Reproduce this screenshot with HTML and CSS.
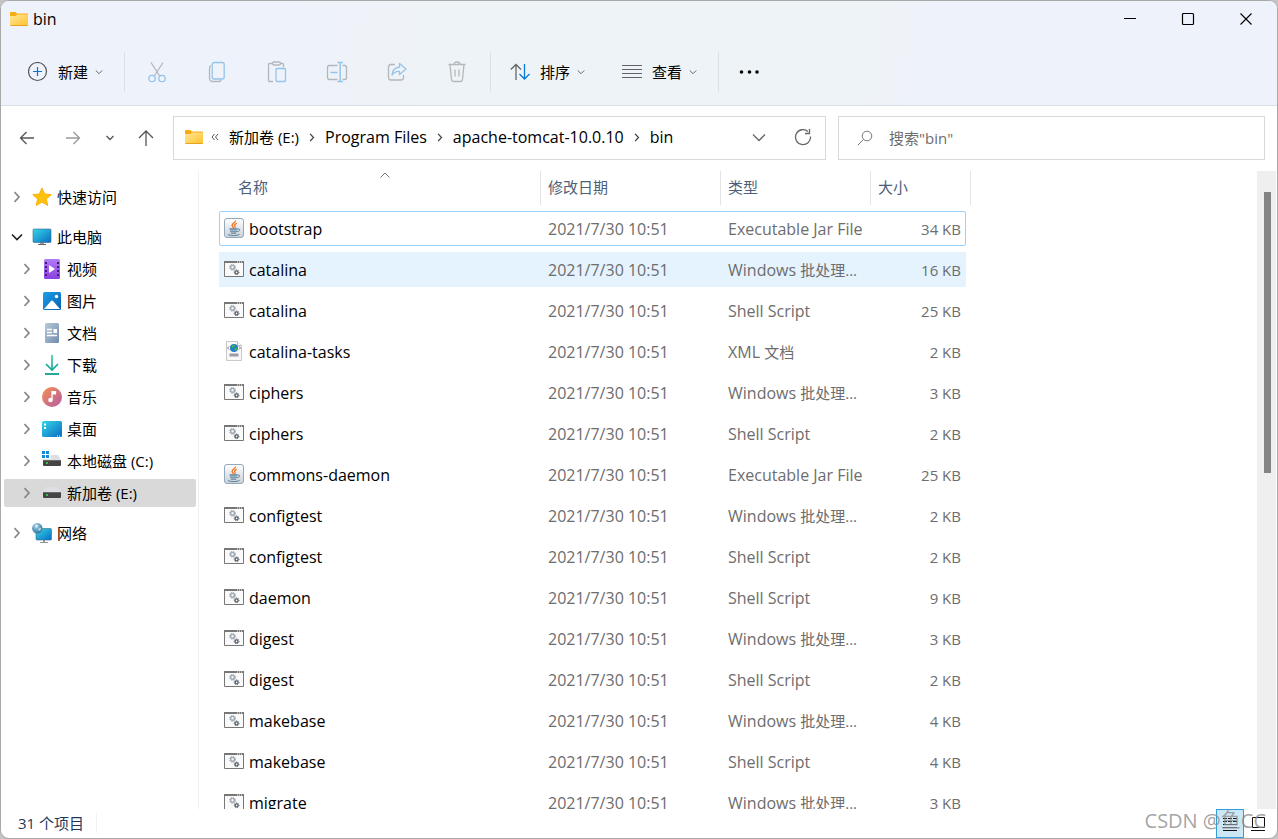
FILE: index.html
```html
<!DOCTYPE html>
<html lang="zh-CN">
<head>
<meta charset="utf-8">
<title>bin</title>
<link rel="stylesheet" href="styles.css">
</head>
<body>
<svg class="sprite" aria-hidden="true">
  <defs>
    <linearGradient id="g-folder" x1="0" y1="0" x2="1" y2="1"><stop offset="0" stop-color="#ffe69b"/><stop offset="1" stop-color="#ffc32b"/></linearGradient>
    <linearGradient id="g-screen" x1="0" y1="0" x2="1" y2="1"><stop offset="0" stop-color="#35d6e6"/><stop offset="1" stop-color="#0a6cc4"/></linearGradient>
    <linearGradient id="g-video" x1="0" y1="0" x2="0" y2="1"><stop offset="0" stop-color="#b27bf5"/><stop offset="1" stop-color="#8a3fe0"/></linearGradient>
    <linearGradient id="g-pic" x1="0" y1="0" x2="1" y2="1"><stop offset="0" stop-color="#1fa0e8"/><stop offset="1" stop-color="#0560b5"/></linearGradient>
    <linearGradient id="g-doc" x1="0" y1="0" x2="1" y2="1"><stop offset="0" stop-color="#b9cadb"/><stop offset="1" stop-color="#6f8cab"/></linearGradient>
    <linearGradient id="g-music" x1="0" y1="0" x2="1" y2="1"><stop offset="0" stop-color="#f59250"/><stop offset="1" stop-color="#b45aa6"/></linearGradient>
    <linearGradient id="g-down" x1="0" y1="0" x2="0" y2="1"><stop offset="0" stop-color="#35c98e"/><stop offset="1" stop-color="#0b9f9c"/></linearGradient>
    <linearGradient id="g-java" x1="0" y1="0" x2="0" y2="1"><stop offset="0" stop-color="#ffffff"/><stop offset="1" stop-color="#c9d0d6"/></linearGradient>
    <radialGradient id="g-globe" cx=".4" cy=".3" r=".8"><stop offset="0" stop-color="#b9dcec"/><stop offset=".5" stop-color="#5b9cbf"/><stop offset="1" stop-color="#2d6c93"/></radialGradient>
  </defs>
  <symbol id="folder" viewBox="0 0 18 14"><path d="M0 1q0-1 1-1h4.500l1.500 1.500h10q1 0 1 1V5H0z" fill="#f8ac12"/><path d="M0 4h5.500l1.500-1.500h10q1 0 1 1V13q0 1-1 1H1q-1 0-1-1z" fill="url(#g-folder)"/><path d="M.5 13.500h17" stroke="#e9a31b"/></symbol>
  <symbol id="down" viewBox="0 0 8 8"><path d="M.8 2.500 4 5.700 7.200 2.500" fill="none" stroke="currentColor"/></symbol>
  <symbol id="right" viewBox="0 0 8 12"><path d="M1.500 1.200 6 6 1.500 10.800" fill="none" stroke="currentColor" stroke-width="1.700"/></symbol>
  <symbol id="cmd" viewBox="0 0 20 16"><path d="M.5.500h19v15H.5z" fill="#fafafa" stroke="#777"/><path d="M0 0h20v2H0z" fill="#777"/><path d="M13 1h1m1 0h1m1 0h1" stroke="#fff"/><circle cx="8.500" cy="6.300" r="1.900" fill="none" stroke="#9ca7b2" stroke-width="1.400"/><circle cx="8.500" cy="6.300" r="3" fill="none" stroke="#9ca7b2" stroke-width="1" stroke-dasharray="1.300 1.056"/><circle cx="12.600" cy="11.300" r="1.500" fill="none" stroke="#56616b" stroke-width="1.300"/><circle cx="12.600" cy="11.300" r="2.400" fill="none" stroke="#56616b" stroke-width="1" stroke-dasharray="1 .885"/></symbol>
  <symbol id="java" viewBox="0 0 20 20"><rect x=".5" y=".5" width="19" height="19" rx="2.500" fill="url(#g-java)" stroke="#93a9bd"/><path d="M11.500 2.500c.6 2-3.700 3-3.400 5 .1 1 1.200 1.600 1.400 2.600M12.800 5.300c-1.800.6-2.900 1.700-1.900 2.900.4.600.3 1.200-.2 1.700" fill="none" stroke="#f0701d" stroke-width="1.300"/><path d="M5.500 11h8M6 13.200h7M6.800 15.200h5.400" stroke="#5d819f" stroke-width="1.300"/><path d="M13.500 11c3-.8 2.800 2.300-.5 2.800M4 16.600c2 1.300 9.500 1.300 11.500-.2" fill="none" stroke="#5d819f"/></symbol>
  <symbol id="xml" viewBox="0 0 20 20"><path d="M2.500.5h11l4 4v15h-15z" fill="#f8f8f8" stroke="#c9c9c9"/><path d="M13.500.5v4h4" fill="#fff" stroke="#bbb"/><circle cx="10" cy="7" r="4" fill="#1d7fc4"/><path d="M8 4.500q2-1.500 3 0l-1.500 2-2 .5zM10 8l3-1.500q.5 2-1.500 3.700z" fill="#42b649"/><path d="M5 5.500 3.500 7 5 8.500m10-3L16.500 7 15 8.500" fill="none" stroke="#777"/><path d="M5.500 12.500h9v3h-9z" fill="#9a9aa8"/></symbol>
  <symbol id="drive" viewBox="0 0 18 11"><path d="M3 0h12l3 5H0z" fill="#dedfe2"/><path d="M0 5h18v5q0 1-1 1H1q-1 0-1-1z" fill="#454545"/><path d="M0 5.500h18" stroke="#6a6a6a"/><path d="M3 8h2" stroke="#36e04c" stroke-width="1.500"/></symbol>
</svg>

<div class="window">
  <header class="top">
    <div class="titlebar">
      <svg class="folder"><use href="#folder"/></svg>
      <h1 class="title">bin</h1>
      <div class="caption">
        <button aria-label="最小化"><svg viewBox="0 0 14 14"><path d="M1 6.500h12" stroke="#000"/></svg></button>
        <button aria-label="最大化"><svg viewBox="0 0 14 14"><rect x="1.500" y="1.500" width="11" height="11" rx="1" fill="none" stroke="#000" stroke-width="1.200"/></svg></button>
        <button aria-label="关闭"><svg viewBox="0 0 14 14"><path d="M1.500 1.500l11 11m0-11-11 11" stroke="#000" stroke-width="1.100"/></svg></button>
      </div>
    </div>
    <div class="toolbar">
      <button class="cmd"><svg class="i20" viewBox="0 0 20 20" fill="none"><circle cx="9.500" cy="9.500" r="9" stroke="#555" stroke-width="1.200"/><path d="M9.500 5v9M5 9.500h9" stroke="#0a74cc" stroke-width="1.200"/></svg><span>新建</span><svg class="caret"><use href="#down"/></svg></button>
      <i class="sep sep-a"></i>
      <div class="tools">
        <button aria-label="剪切"><svg viewBox="0 0 20 22" fill="none" stroke-width="1.300"><path d="M4 1.500 13 15.500M16 1.500 7 15.500" stroke="#b4b7ba"/><g stroke="#94c4ea"><circle cx="5" cy="17.500" r="3.200" fill="#eff3fa"/><circle cx="15" cy="17.500" r="3.200" fill="#eff3fa"/></g></svg></button>
        <button aria-label="复制"><svg viewBox="0 0 20 22" fill="none" stroke-width="1.300"><path d="M4 4.500Q2.500 5 2.500 7v10q0 3.500 3.500 3.500h6q1.500 0 2.300-1.300" stroke="#b4b7ba"/><rect x="5.200" y="1.500" width="12" height="16.500" rx="2" stroke="#94c4ea"/></svg></button>
        <button aria-label="粘贴"><svg viewBox="0 0 20 22" fill="none" stroke-width="1.300"><path d="M6 20.500H2.500q-1 0-1-1v-16q0-1 1-1H6m7 0h2.500q1 0 1 1v2.700" stroke="#b4b7ba"/><rect x="5.500" y="1" width="8" height="3" rx="1.500" stroke="#b4b7ba"/><rect x="9" y="7.500" width="9.500" height="13" rx="1" stroke="#94c4ea"/></svg></button>
        <button aria-label="重命名"><svg class="wide" viewBox="0 0 22 22" fill="none" stroke-width="1.300"><path d="M11.500 18.500H3.500q-2 0-2-2v-10q0-2 2-2h8m5 0h2q2 0 2 2v10q0 2-2 2h-2" stroke="#b4b7ba"/><path d="M11.500 1.500h5.500m-5.500 19H17M14.200 1.500v19M4.500 11.500h7" stroke="#94c4ea" stroke-width="1.500"/></svg></button>
        <button aria-label="共享"><svg viewBox="0 0 20 22" fill="none" stroke-width="1.300"><path d="M8 3.500H4q-2.500 0-2.500 2.500v10.500Q1.500 19 4 19h10q2.500 0 2.500-2.500V14" stroke="#b4b7ba"/><path d="M12.500 2.500 19 8l-6.500 5.500v-3Q8 10 5 14q.5-7 7.500-8z" stroke="#94c4ea" stroke-linejoin="round"/></svg></button>
        <button aria-label="删除"><svg viewBox="0 0 20 22" fill="none" stroke="#b4b7ba" stroke-width="1.300"><path d="M1.500 3.500h17M7 3.500Q7 1 10 1t3 2.500M3 3.500l1.500 15q.2 2 2 2h7q1.800 0 2-2l1.500-15M8 8.500v7m4-7v7"/></svg></button>
      </div>
      <i class="sep sep-b"></i>
      <button class="cmd"><svg class="i20" viewBox="0 0 20 20" fill="none" stroke-width="1.300"><path d="M6 18V3M.8 7.500 6 2.500l5 5" stroke="#666"/><path d="M14.500 2v15M9.500 12l5 5 5-5" stroke="#0a78d6"/></svg><span>排序</span><svg class="caret"><use href="#down"/></svg></button>
      <button class="cmd cmd-view"><svg class="i20" viewBox="0 0 20 20"><path d="M0 3.500h20M0 7.500h20M0 11.500h20M0 15.500h20" stroke="#606468" stroke-width="1"/></svg><span>查看</span><svg class="caret"><use href="#down"/></svg></button>
      <i class="sep sep-c"></i>
      <button class="cmd" aria-label="更多"><svg class="i20" viewBox="0 0 20 20"><circle cx="2.500" cy="10" r="1.800"/><circle cx="10.500" cy="10" r="1.800"/><circle cx="18" cy="10" r="1.800"/></svg></button>
    </div>
  </header>

  <div class="navrow">
    <div class="history">
      <button class="b46" aria-label="后退"><svg class="i16" viewBox="0 0 16 16"><path d="M15 8H1.500M7.500 2 1.500 8l6 6"/></svg></button>
      <button class="b46 dim" aria-label="前进"><svg class="i16" viewBox="0 0 16 16"><path d="M1 8h13.500M8.500 2l6 6-6 6"/></svg></button>
      <button class="b28" aria-label="最近位置"><svg class="i8" viewBox="0 0 8 8"><path d="M.5 2 4 5.500 7.500 2"/></svg></button>
      <button class="b44" aria-label="上移"><svg class="i16" viewBox="0 0 16 16"><path d="M8 16V1M1 8l7-7 7 7"/></svg></button>
    </div>
    <div class="address">
      <svg class="folder"><use href="#folder"/></svg>
      <svg class="more" viewBox="0 0 8 8"><path d="M3.500 1 1 4l2.500 3M7 1 4.500 4 7 7" fill="none" stroke="#555"/></svg>
      <a href="#e">新加卷 (E:)</a><svg class="crumb"><use href="#right"/></svg>
      <a class="latin" href="#pf">Program Files</a><svg class="crumb"><use href="#right"/></svg>
      <a class="latin" href="#tomcat">apache-tomcat-10.0.10</a><svg class="crumb"><use href="#right"/></svg>
      <a class="latin" href="#bin">bin</a>
      <div class="address-end">
        <button aria-label="历史记录"><svg viewBox="0 0 18 18"><path d="M3 6.500l6 6 6-6"/></svg></button>
        <button aria-label="刷新"><svg viewBox="0 0 18 18"><path d="M16.500 8.500A7.500 7.500 0 1 1 14 3.500M15.500 1v4.500H11"/></svg></button>
      </div>
    </div>
    <label class="search">
      <svg viewBox="0 0 16 16"><circle cx="10" cy="6" r="4.800"/><path d="M6.500 9.500.8 15.200"/></svg>
      <input type="text" aria-label="搜索" placeholder='搜索"bin"'>
    </label>
  </div>

  <div class="main">
    <nav class="tree">
      <a class="node" href="#quick"><svg class="arrow"><use href="#right"/></svg><svg class="ico" viewBox="0 0 20 20"><path d="M10 1l2.700 6 6.500.7-4.900 4.300 1.500 6.500-5.800-3.400-5.800 3.400 1.500-6.500L.8 7.700 7.300 7z" fill="#ffc20c" stroke="#f9b208" stroke-linejoin="round"/></svg>快速访问</a>
      <div class="group">
        <a class="node" href="#pc"><svg class="arrow open" viewBox="0 0 12 12"><path d="M1 3.500l5 5 5-5" fill="none" stroke="#222" stroke-width="1.600"/></svg><svg class="ico" viewBox="0 0 20 20"><path d="M8 15h4v2H8z" fill="#9aa3aa"/><path d="M6 17.500h8" stroke="#666"/><rect x="1" y="2" width="18" height="13.500" rx="1" fill="url(#g-screen)" stroke="#3c6a86" stroke-width=".6"/></svg>此电脑</a>
        <a class="node child" href="#video"><svg class="arrow"><use href="#right"/></svg><svg class="ico" viewBox="0 0 20 20"><rect x="2" width="16" height="20" rx="1.500" fill="url(#g-video)"/><path d="M4 3v15M16 3v15" stroke="#3f1b73" stroke-width="2" stroke-dasharray="2 2"/><path d="M7 6v8l6-4z" fill="#fff"/></svg>视频</a>
        <a class="node child" href="#pic"><svg class="arrow"><use href="#right"/></svg><svg class="ico" viewBox="0 0 20 20"><rect x="1" y="1" width="18" height="18" rx="1.500" fill="url(#g-pic)"/><path d="M2 18l7-8q1-1 2 0l7 8z" fill="#fff"/><circle cx="14.500" cy="5.500" r="1.700" fill="#fff"/></svg>图片</a>
        <a class="node child" href="#doc"><svg class="arrow"><use href="#right"/></svg><svg class="ico" viewBox="0 0 20 20"><rect x="3" width="14" height="20" rx="1.500" fill="url(#g-doc)"/><path d="M5 6.500h5M5 9.500h5M5 12.500h10" stroke="#fff" stroke-width="1.300"/><path d="M11.500 6h3.500v4h-3.500z" fill="#fff"/></svg>文档</a>
        <a class="node child" href="#down-dir"><svg class="arrow"><use href="#right"/></svg><svg class="ico" viewBox="0 0 20 20"><path d="M9.200 0h1.600v15H9.200z" fill="url(#g-down)"/><path d="M4 9l6 6 6-6" fill="none" stroke="#16ab97" stroke-width="1.700"/><path d="M3 19h14" stroke="#0f9f90" stroke-width="1.800"/></svg>下载</a>
        <a class="node child" href="#music"><svg class="arrow"><use href="#right"/></svg><svg class="ico" viewBox="0 0 20 20"><circle cx="10" cy="10" r="10" fill="url(#g-music)"/><circle cx="8.500" cy="13" r="2.300" fill="#fff"/><path d="M10 13V4.500h3.500V7H10.500" fill="#fff" stroke="#fff" stroke-width="1.200"/></svg>音乐</a>
        <a class="node child" href="#desk"><svg class="arrow"><use href="#right"/></svg><svg class="ico" viewBox="0 0 20 20"><rect y="2" width="20" height="16" rx="1.500" fill="url(#g-screen)"/><path d="M2 4.500h2v2H2zM2 8h2v2H2zM15 16.500h1v1h-1zM17 16.500h1v1h-1z" fill="#fff"/></svg>桌面</a>
        <a class="node child" href="#c"><svg class="arrow"><use href="#right"/></svg><svg class="ico" viewBox="0 0 20 20"><use href="#drive" x="1" y="4" width="18" height="11"/><path d="M-.5-1h9v9h-9z" fill="#fff"/><path d="M0 0h3v3H0zM4 0h3v3H4zM0 4h3v3H0zM4 4h3v3H4z" fill="#1489dc"/></svg>本地磁盘 (C:)</a>
        <a class="node child selected" href="#e"><svg class="arrow"><use href="#right"/></svg><svg class="ico" viewBox="0 0 20 20"><use href="#drive" x="1" y="4" width="18" height="11"/></svg>新加卷 (E:)</a>
      </div>
      <a class="node" href="#net"><svg class="arrow"><use href="#right"/></svg><svg class="ico" viewBox="0 0 20 20"><rect x="4" y="5.500" width="15.500" height="11.500" rx="1" fill="url(#g-screen)" stroke="#3c6a86" stroke-width=".6"/><path d="M11 17h2v2h3v1H8v-1h3z" fill="#8b969e"/><circle cx="5.300" cy="5.300" r="5.200" fill="url(#g-globe)"/><path d="M3 2q3-1 3 1L4.500 5zM6 6l3-1-1 3z" fill="#d7eaf2"/></svg>网络</a>
    </nav>

    <div class="files">
      <table>
        <colgroup><col class="c-name"><col class="c-date"><col class="c-type"><col class="c-size"></colgroup>
        <thead><tr><th>名称<svg class="sort" viewBox="0 0 10 6"><path d="M.5 5.500 5 1l4.500 4.500" fill="none" stroke="#777"/></svg></th><th>修改日期</th><th>类型</th><th>大小</th></tr></thead>
        <tbody>
          <tr class="focused"><td><svg><use href="#java"/></svg>bootstrap</td><td>2021/7/30 10:51</td><td>Executable Jar File</td><td>34 KB</td></tr>
          <tr class="hover"><td><svg class="flat"><use href="#cmd"/></svg>catalina</td><td>2021/7/30 10:51</td><td>Windows <span class="zh">批处理...</span></td><td>16 KB</td></tr>
          <tr><td><svg class="flat"><use href="#cmd"/></svg>catalina</td><td>2021/7/30 10:51</td><td>Shell Script</td><td>25 KB</td></tr>
          <tr><td><svg><use href="#xml"/></svg>catalina-tasks</td><td>2021/7/30 10:51</td><td>XML <span class="zh">文档</span></td><td>2 KB</td></tr>
          <tr><td><svg class="flat"><use href="#cmd"/></svg>ciphers</td><td>2021/7/30 10:51</td><td>Windows <span class="zh">批处理...</span></td><td>3 KB</td></tr>
          <tr><td><svg class="flat"><use href="#cmd"/></svg>ciphers</td><td>2021/7/30 10:51</td><td>Shell Script</td><td>2 KB</td></tr>
          <tr><td><svg><use href="#java"/></svg>commons-daemon</td><td>2021/7/30 10:51</td><td>Executable Jar File</td><td>25 KB</td></tr>
          <tr><td><svg class="flat"><use href="#cmd"/></svg>configtest</td><td>2021/7/30 10:51</td><td>Windows <span class="zh">批处理...</span></td><td>2 KB</td></tr>
          <tr><td><svg class="flat"><use href="#cmd"/></svg>configtest</td><td>2021/7/30 10:51</td><td>Shell Script</td><td>2 KB</td></tr>
          <tr><td><svg class="flat"><use href="#cmd"/></svg>daemon</td><td>2021/7/30 10:51</td><td>Shell Script</td><td>9 KB</td></tr>
          <tr><td><svg class="flat"><use href="#cmd"/></svg>digest</td><td>2021/7/30 10:51</td><td>Windows <span class="zh">批处理...</span></td><td>3 KB</td></tr>
          <tr><td><svg class="flat"><use href="#cmd"/></svg>digest</td><td>2021/7/30 10:51</td><td>Shell Script</td><td>2 KB</td></tr>
          <tr><td><svg class="flat"><use href="#cmd"/></svg>makebase</td><td>2021/7/30 10:51</td><td>Windows <span class="zh">批处理...</span></td><td>4 KB</td></tr>
          <tr><td><svg class="flat"><use href="#cmd"/></svg>makebase</td><td>2021/7/30 10:51</td><td>Shell Script</td><td>4 KB</td></tr>
          <tr><td><svg class="flat"><use href="#cmd"/></svg>migrate</td><td>2021/7/30 10:51</td><td>Windows <span class="zh">批处理...</span></td><td>3 KB</td></tr>
        </tbody>
      </table>
    </div>
    <div class="scrollbar"><div class="thumb"></div></div>
  </div>

  <footer class="status">
    <span class="count">31 个项目</span>
    <div class="views">
      <button class="on" aria-label="详细信息"><svg viewBox="0 0 16 16"><path d="M1 2.500h4m1 0h4m1 0h4M1 5.500h4m1 0h4m1 0h4M1 8.500h14M1 11.500h14M1 14.500h14" stroke="#111"/></svg></button>
      <button aria-label="大图标"><svg viewBox="0 0 16 16"><path d="M2.500 1.500h12v10h-12zM1 14.500h14" fill="none" stroke="#111"/></svg></button>
    </div>
    <span class="watermark">CSDN @鱼CC</span>
  </footer>
</div>
</body>
</html>
```

FILE: styles.css
```css
* { box-sizing: border-box; }

body {
  margin: 0;
  height: 100vh;
  background: #c4c4c4;
  color: #000;
  font: 15px/20px "Open Sans", "Noto Sans CJK SC", sans-serif;
}

button {
  display: flex;
  align-items: center;
  justify-content: center;
  margin: 0;
  padding: 0;
  border: 0;
  background: none;
  color: inherit;
  font: inherit;
}

a { color: inherit; text-decoration: none; }
svg { display: block; flex: none; }

.sprite { position: absolute; width: 0; height: 0; }

.window {
  display: flex;
  flex-direction: column;
  height: 100%;
  overflow: hidden;
  border: 1px solid #a9a9a9;
  border-radius: 9px;
  background: #fff;
}

/* title bar and commands */
.top {
  border-bottom: 1px solid #dadfe4;
  background: linear-gradient(100deg, #eef2fb 18%, #eef3f7 34%, #eef3f7 68%, #eef2fb 74%);
}

.titlebar { display: flex; align-items: center; height: 36px; padding: 0 2px 0 9px; }
.title { margin: 0 0 0 5px; font-size: 16px; font-weight: 400; }
.folder { width: 18px; height: 14px; }
.caption { display: flex; margin-left: auto; }
.caption button { width: 58px; height: 36px; }
.caption svg { width: 14px; height: 14px; }

.toolbar { display: flex; align-items: center; height: 68px; padding: 2px 0 0 27px; }
.cmd { height: 40px; }
.cmd span { margin: 0 7px 0 10px; }
.cmd-view { margin-left: 37px; }
.caret { width: 8px; height: 8px; color: #666; }
.i20 { width: 20px; height: 20px; }
.sep { width: 1px; height: 40px; background: #dcdfe4; }
.sep-a { margin: 0 2px 0 21px; }
.sep-b { margin: 0 19px 0 3px; }
.sep-c { margin: 0 20px 0 21px; }
.tools { display: flex; }
.tools button { width: 60px; height: 40px; }
.tools svg { width: 20px; height: 22px; }
.tools .wide { width: 22px; }

/* navigation row */
.navrow {
  display: grid;
  grid-template-columns: auto minmax(0, 665fr) minmax(0, 427fr);
  height: 65px;
  padding: 10px 12px 11px 3px;
}
.history { display: flex; margin-right: 5px; }
.history svg { fill: none; stroke: #555; stroke-width: 1.3; }
.history .dim svg { stroke: #999; }
.b46 { width: 46px; }
.b28 { width: 28px; }
.b44 { width: 44px; }
.i16 { width: 16px; height: 16px; }
.i8 { width: 8px; height: 8px; }

.address,
.search { display: flex; align-items: center; border: 1px solid #d9d9d9; }
.address { margin-right: 12px; padding: 0 0 2px 11px; white-space: nowrap; }
.search { padding-left: 18px; }
.latin { font-size: 16px; }
.more { width: 8px; height: 8px; margin: 0 10px 0 8px; }
.crumb { width: 6px; height: 9px; margin: 0 10px; color: #444; }
.address-end { display: flex; margin-left: auto; }
.address-end button { width: 44px; height: 40px; }
.address-end svg { width: 18px; height: 18px; fill: none; stroke: #666; stroke-width: 1.3; }
.search svg { width: 16px; height: 16px; fill: none; stroke: #777; }
.search input {
  flex: 1;
  min-width: 0;
  margin-left: 16px;
  padding: 0;
  border: 0;
  outline: 0;
  background: none;
  font: inherit;
}
.search input::placeholder { color: #6d6d6d; opacity: 1; }

/* folder tree */
.main { display: flex; flex: 1; min-height: 0; }
.tree {
  display: flex;
  flex-direction: column;
  gap: 12px;
  width: 198px;
  flex: none;
  padding: 12px 2px 0 3px;
  border-right: 1px solid #f0f0f0;
}
.group { display: flex; flex-direction: column; gap: 4px; }
.node { display: flex; align-items: center; height: 28px; padding-left: 9px; border-radius: 2px; }
.child { padding-left: 19px; }
.selected { background: #d9d9d9; }
.arrow { width: 8px; height: 12px; margin-right: 11px; color: #888; }
.arrow.open { width: 12px; margin: 0 9px 0 -2px; }
.ico { width: 20px; height: 20px; margin-right: 5px; overflow: visible; }

/* file list */
.files { flex: 1; min-width: 0; overflow: hidden; padding-left: 20px; }
table {
  width: 747px;
  margin-top: -6px;
  table-layout: fixed;
  border-spacing: 0 6px;
  color: #6d6d6d;
  white-space: nowrap;
}
.c-name { width: 321px; }
.c-date { width: 180px; }
.c-type { width: 150px; }
th {
  position: relative;
  height: 34px;
  padding: 0 0 2px 7px;
  border-left: 1px solid #e3e3e3;
  color: #4c607a;
  font-weight: 400;
  text-align: left;
}
th:first-child { padding-left: 19px; border: 0; }
th:last-child::after {
  content: "";
  position: absolute;
  top: 0;
  right: -5px;
  width: 1px;
  height: 100%;
  background: #e3e3e3;
}
.sort { position: absolute; top: 1px; left: 161px; width: 10px; height: 6px; }
td { height: 35px; padding: 0 0 0 8px; font-size: 16px; }
td:first-child { display: flex; align-items: center; padding-left: 5px; color: #000; }
td:last-child { padding: 0 5px 0 0; font-size: 15px; text-align: right; }
td svg { width: 20px; height: 20px; margin: 0 5px 2px 0; }
td .flat { height: 16px; }
.zh { font-size: 15px; }
.focused { outline: 1px solid #99d1ff; outline-offset: -1px; border-radius: 2px; }
.hover { background: #e5f3ff; }

.scrollbar { flex: none; width: 19px; padding: 21px 5px 0 7px; margin-right: 1px; background: #efefef; }
.thumb { height: 46%; max-height: 281px; background: #848484; }

/* status bar */
.status {
  position: relative;
  display: flex;
  align-items: center;
  height: 29px;
  padding: 0 5px 0 17px;
  color: #1e395b;
}
.count { margin-bottom: 2px; padding-right: 12px; border-right: 1px solid #f0f0f0; }
.views { display: flex; margin-left: auto; }
.views button { width: 28px; height: 29px; }
.views .on { border: 1px solid #2f9fdb; background: #cce8f7; }
.views svg { width: 16px; height: 16px; }
.watermark { position: absolute; right: 11px; bottom: 7px; color: #8c8c8ccc; font-size: 20px; }
```
